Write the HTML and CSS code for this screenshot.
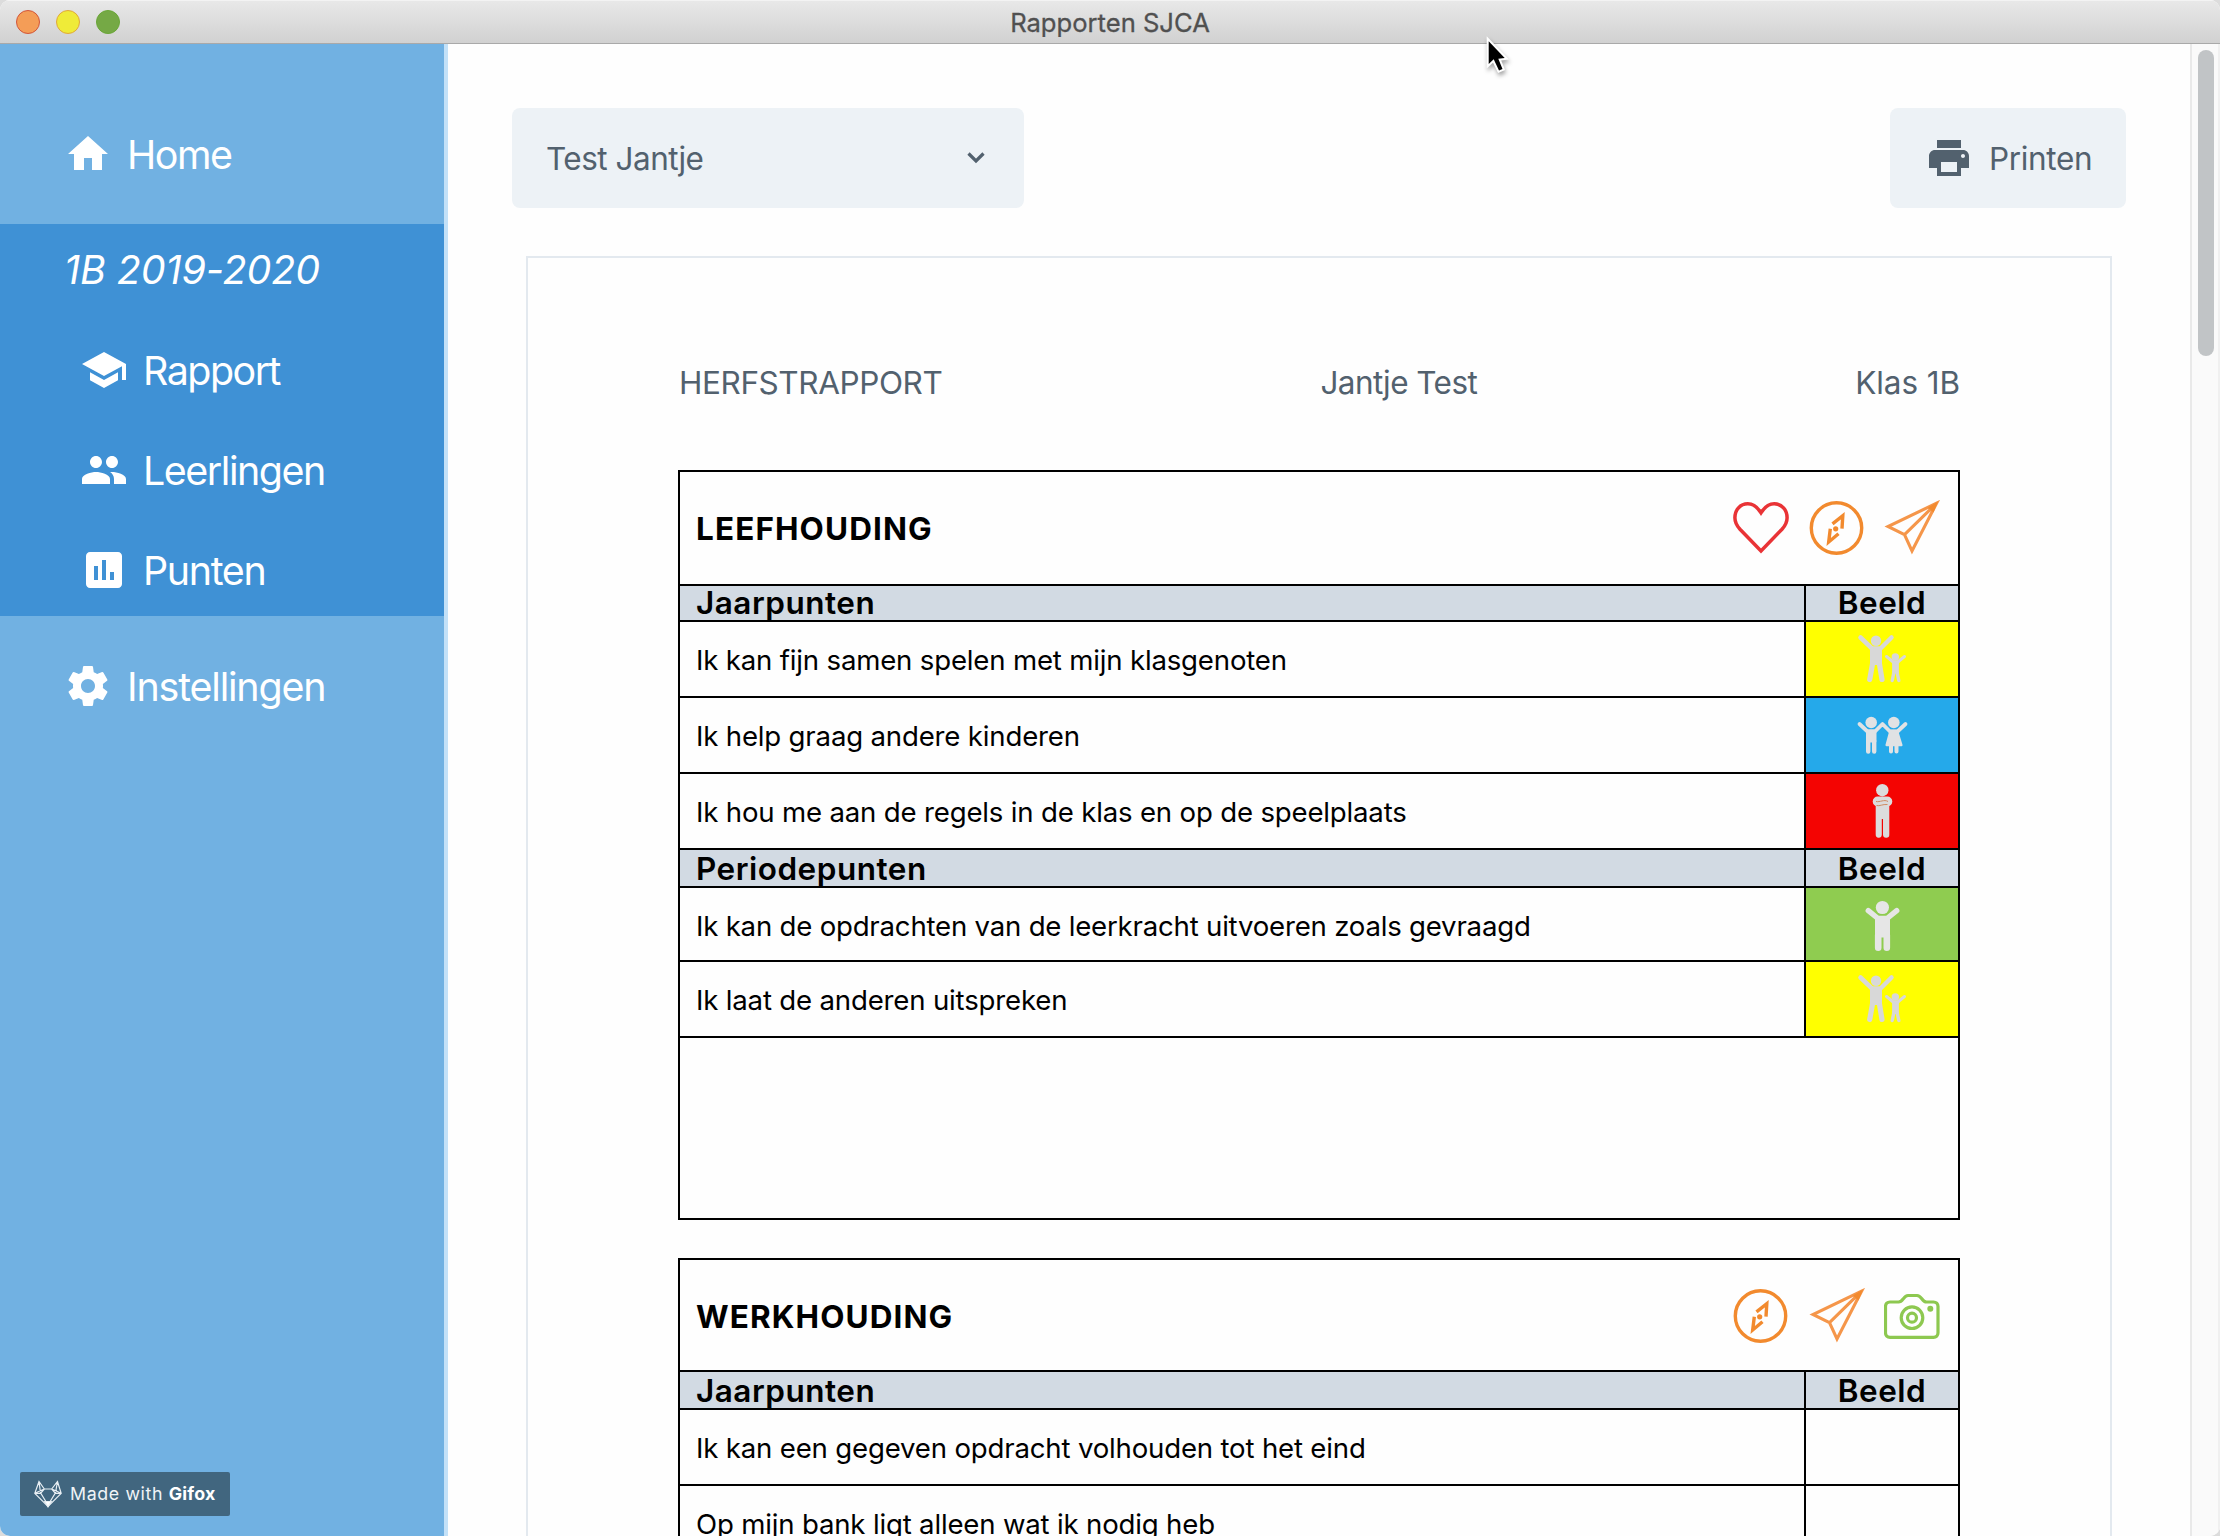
FILE: index.html
```
<!DOCTYPE html>
<html lang="nl">
<head>
<meta charset="utf-8">
<title>Rapporten SJCA</title>
<link rel="stylesheet" href="styles.css">
</head>
<body>
<svg class="sprite" aria-hidden="true">
  <symbol id="heart" viewBox="0 0 56 56"><path d="M28 12.7C24.3 7 19.7 3.8 14.8 3.8 7.2 3.8 1.9 10 1.9 17.7c0 4.300 1.700 7.800 5.100 11.500L28 51l21-21.800c3.400-3.700 5.100-7.200 5.100-11.500C54.100 10 48.800 3.800 41.200 3.800 36.300 3.800 31.700 7 28 12.700z" fill="none" stroke="#e93336" stroke-width="3.500"/></symbol>
  <symbol id="compass" viewBox="0 0 56 56"><g fill="none" stroke="#f28a2e" stroke-width="3.400"><circle cx="27.500" cy="28" r="25.200"/><path d="M23.500 23.800L33.800 15.600L33 28.700M21.300 28.800L19.700 42L29.500 33.800"/></g><circle cx="26.700" cy="28.800" r="2.600" fill="#f28a2e"/></symbol>
  <symbol id="plane" viewBox="0 0 56 56"><path d="M52.600 3.200L4 26.500l16.500 8.200L28 51zM20.500 34.700L52.600 3.200" fill="none" stroke="#f5964a" stroke-width="3.100"/><path d="M54 1.500L44 7.500l5.500 5z" fill="#f28a2e"/></symbol>
  <symbol id="camera" viewBox="0 0 56 56"><g fill="none" stroke="#8dc850" stroke-width="3.200"><path d="M6 14h8.500c2.200 0 3.600-1.600 4.800-3.200C21 8.400 22 7.500 24 7.500h9c2 0 3.200 1 4.800 3.200C39.200 12.600 40.300 14 42.500 14H49.500c2.700 0 4.500 1.800 4.500 4.500v26.300c0 2.700-1.800 4.500-4.500 4.500H6c-2.700 0-4.500-1.800-4.500-4.500V18.500C1.500 15.800 3.300 14 6 14z"/><circle cx="28" cy="29.700" r="10.800"/><circle cx="28" cy="29.700" r="4.500"/></g><circle cx="46.300" cy="20.700" r="3" fill="#8dc850"/></symbol>
  <symbol id="parent-child" viewBox="0 0 56 56"><g fill="#d8d8d8" stroke="#d8d8d8" stroke-linecap="round" stroke-linejoin="round"><circle cx="22" cy="9.700" r="5.200" stroke="none"/><path d="M6.500 6.500L18 17.500h8.500L37.500 6.500" fill="none" stroke-width="4.500"/><path d="M17.500 17.500h9v15h-9z" stroke-width="3"/><path d="M18.700 32L15.700 48.500M25.300 32L28 48.500" stroke-width="5.200"/><circle cx="41.300" cy="26" r="3.700" stroke="none"/><path d="M32.500 25.500l6.700 5.500h4.600L50.500 25.500" fill="none" stroke-width="3"/><path d="M39.300 31h4.400v10h-4.400z" stroke-width="2.400"/><path d="M40 41l-1.800 8.500M43 41l1.800 8.500" stroke-width="3.400"/></g></symbol>
  <symbol id="friends" viewBox="0 0 56 56"><g fill="#e0e2e4" stroke="#e0e2e4" stroke-linecap="round" stroke-linejoin="round"><circle cx="17.200" cy="15.500" r="5.800" stroke="none"/><circle cx="39.800" cy="15.500" r="5.800" stroke="none"/><path d="M5.500 17L13.500 24.500h7.500L28.500 17L36 24.500h7.500L51.500 17" fill="none" stroke-width="3.800"/><path d="M13.500 24h7.500v10h-7.500z" stroke-width="3"/><path d="M14.200 34v10.500M20.200 34v10.500" stroke-width="4.400"/><path d="M36.500 24h6.500l4.300 14h-14.600z" stroke-width="2.500"/><path d="M37 39v5.500M42.500 39v5.500" stroke-width="4"/></g></symbol>
  <symbol id="crossed-arms" viewBox="0 0 56 56"><circle cx="28.300" cy="7.200" r="6.200" fill="#dcdcdc"/><g fill="#dcdcdc"><rect x="18.700" y="13.500" width="19.600" height="10" rx="5"/><path d="M21.700 20h13.600v31.500a2.500 2.500 0 0 1-6.300.3V36h-1.200v15.800a2.500 2.500 0 0 1-6.100-.3z"/></g><path d="M22 18.500c4 1 8-2.500 12 0M22.500 22.500c3 1 6-1.500 11-1" fill="none" stroke="#cf8c63" stroke-width="1"/></symbol>
  <symbol id="cheering" viewBox="0 0 56 56"><g fill="#e6e6e6" stroke="#e6e6e6" stroke-linecap="round" stroke-linejoin="round"><circle cx="28.400" cy="11.500" r="6.600" stroke="none"/><path d="M14.300 14.700L24 22.500h9L42.700 14.700" fill="none" stroke-width="5.400"/><path d="M23 22.500h11v17h-11z" stroke-width="4"/><path d="M24.200 39v12.700M32.800 39v12.700" stroke-width="6.600"/></g></symbol>
</svg>

<div class="window">
  <header class="titlebar">
    <div class="lights"><span class="light close"></span><span class="light minimize"></span><span class="light zoom"></span></div>
    <span class="window-title">Rapporten SJCA</span>
  </header>
  <div class="body">
    <nav class="sidebar">
      <a class="nav-item"><svg class="nav-icon" viewBox="0 0 24 24"><path d="M10 20v-6h4v6h5v-8h3L12 3 2 12h3v8z"/></svg><span class="t-home">Home</span></a>
      <section class="nav-group">
        <h2 class="group-title">1B 2019-2020</h2>
        <a class="nav-item sub"><svg class="nav-icon" viewBox="0 0 24 24"><path d="M5 13.180v4L12 21l7-3.820v-4L12 17l-7-3.820zM12 3L1 9l11 6 9-4.910V17h2V9L12 3z"/></svg><span class="t-rapport">Rapport</span></a>
        <a class="nav-item sub"><svg class="nav-icon" viewBox="0 0 24 24"><path d="M16 11c1.660 0 2.990-1.340 2.990-3S17.660 5 16 5s-3 1.340-3 3 1.340 3 3 3zm-8 0c1.660 0 2.990-1.340 2.990-3S9.660 5 8 5 5 6.340 5 8s1.340 3 3 3zm0 2c-2.330 0-7 1.170-7 3.500V19h14v-2.500c0-2.330-4.670-3.500-7-3.500zm8 0c-.29 0-.62.02-.97.050 1.160.84 1.970 1.970 1.970 3.450V19h6v-2.500c0-2.330-4.670-3.500-7-3.500z"/></svg><span class="t-leerlingen">Leerlingen</span></a>
        <a class="nav-item sub"><svg class="nav-icon" viewBox="0 0 24 24"><path d="M19 3H5c-1.100 0-2 .9-2 2v14c0 1.100.9 2 2 2h14c1.100 0 2-.9 2-2V5c0-1.100-.9-2-2-2zM9 17H7v-7h2v7zm4 0h-2V7h2v10zm4 0h-2v-4h2v4z"/></svg><span class="t-punten">Punten</span></a>
      </section>
      <a class="nav-item"><svg class="nav-icon" viewBox="0 0 24 24"><path d="M19.430 12.980c.04-.32.07-.64.07-.98s-.03-.66-.07-.98l2.110-1.650c.19-.15.24-.42.12-.64l-2-3.460c-.12-.22-.39-.3-.61-.22l-2.490 1c-.52-.4-1.080-.73-1.690-.98l-.38-2.650C14.460 2.180 14.250 2 14 2h-4c-.25 0-.46.18-.49.42l-.38 2.650c-.61.25-1.170.59-1.690.98l-2.490-1c-.23-.09-.49 0-.61.22l-2 3.460c-.13.22-.07.49.12.64l2.110 1.650c-.04.32-.07.65-.07.98s.03.66.07.98l-2.110 1.650c-.19.15-.24.42-.12.64l2 3.460c.12.22.39.3.61.22l2.490-1c.52.4 1.080.73 1.690.98l.38 2.650c.03.24.24.42.49.42h4c.25 0 .46-.18.49-.42l.38-2.650c.61-.25 1.170-.59 1.690-.98l2.490 1c.23.09.49 0 .61-.22l2-3.460c.12-.22.07-.49-.12-.64l-2.110-1.650zM12 15.500c-1.930 0-3.500-1.570-3.500-3.500s1.570-3.500 3.500-3.500 3.500 1.570 3.500 3.500-1.570 3.500-3.500 3.500z"/></svg><span class="t-instellingen">Instellingen</span></a>
    </nav>

    <main class="content">
      <div class="toolbar">
        <div class="select"><span>Test Jantje</span><svg class="chevron" viewBox="0 0 20 14"><path d="M2.500 2.500L10 10l7.500-7.500"/></svg></div>
        <button class="print"><svg class="nav-icon" viewBox="0 0 24 24"><path d="M19 8H5c-1.660 0-3 1.340-3 3v6h4v4h12v-4h4v-6c0-1.660-1.340-3-3-3zm-3 11H8v-5h8v5zm3-7c-.55 0-1-.45-1-1s.45-1 1-1 1 .45 1 1-.45 1-1 1zm-1-9H6v4h12V3z"/></svg><span>Printen</span></button>
      </div>
      <article class="paper">
        <div class="report-head"><span class="t-report">HERFSTRAPPORT</span><span class="t-name">Jantje Test</span><span class="t-class">Klas 1B</span></div>

        <section class="subject">
          <div class="subject-head"><h3 class="subject-title">LEEFHOUDING</h3><div class="badges"><svg><use href="#heart"/></svg><svg><use href="#compass"/></svg><svg><use href="#plane"/></svg></div></div>
          <div class="row label slim"><div class="cell">Jaarpunten</div><div class="mark">Beeld</div></div>
          <div class="row"><div class="cell">Ik kan fijn samen spelen met mijn klasgenoten</div><div class="mark yellow"><svg><use href="#parent-child"/></svg></div></div>
          <div class="row"><div class="cell">Ik help graag andere kinderen</div><div class="mark blue"><svg><use href="#friends"/></svg></div></div>
          <div class="row"><div class="cell">Ik hou me aan de regels in de klas en op de speelplaats</div><div class="mark red"><svg><use href="#crossed-arms"/></svg></div></div>
          <div class="row label"><div class="cell">Periodepunten</div><div class="mark">Beeld</div></div>
          <div class="row short"><div class="cell">Ik kan de opdrachten van de leerkracht uitvoeren zoals gevraagd</div><div class="mark green"><svg><use href="#cheering"/></svg></div></div>
          <div class="row"><div class="cell">Ik laat de anderen uitspreken</div><div class="mark yellow"><svg><use href="#parent-child"/></svg></div></div>
          <div class="remarks"></div>
        </section>

        <section class="subject">
          <div class="subject-head low"><h3 class="subject-title">WERKHOUDING</h3><div class="badges"><svg><use href="#compass"/></svg><svg><use href="#plane"/></svg><svg><use href="#camera"/></svg></div></div>
          <div class="row label"><div class="cell">Jaarpunten</div><div class="mark">Beeld</div></div>
          <div class="row"><div class="cell">Ik kan een gegeven opdracht volhouden tot het eind</div><div class="mark"></div></div>
          <div class="row"><div class="cell">Op mijn bank ligt alleen wat ik nodig heb</div><div class="mark"></div></div>
        </section>
      </article>
    </main>
    <div class="scrollbar"><div class="thumb"></div></div>
  </div>

  <div class="watermark">
    <svg class="fox" viewBox="0 0 28 28"><path d="M5 1.500L.8 13.300 14 26.500 27.200 13.300 23.500 1.500 17.700 9h-7.400zM5 1.500l1.500 11.300L14 25M23.500 1.500L21.500 12.800 14 25M.8 13.300L10.300 9M27.200 13.300L17.700 9M.8 13.300h5.700L10.300 9M27.200 13.300h-5.700L17.700 9"/><path class="nose" d="M10.800 21.500h6.400L14 26.800z"/></svg>
    <span class="made">Made with <b>Gifox</b></span>
  </div>
  <svg class="cursor" viewBox="0 0 28 42"><path d="M3.700 7.300V30l5-4.700L14 36.500l3.500-1.500-4.200-10.300 6.400-.7z"/></svg>
</div>
</body>
</html>
```
FILE: styles.css
```
* { box-sizing: border-box; }

body {
  margin: 0;
  height: 1536px;
  overflow: hidden;
  background: #dcdcdc;
  font-family: Inter, "Liberation Sans", sans-serif;
  color: #000;
}

h2, h3 { margin: 0; font-weight: inherit; }

.sprite { position: absolute; width: 0; height: 0; }

.window {
  position: relative;
  display: flex;
  flex-direction: column;
  width: 2220px;
  height: 1536px;
  overflow: hidden;
  border-radius: 10px;
  background: #fefefe;
}

/* Title bar */
.titlebar {
  display: grid;
  grid-template-columns: 1fr auto 1fr;
  align-items: center;
  flex: none;
  height: 44px;
  padding: 0 16px;
  border-top: 1px solid #f3f3f3;
  border-bottom: 1px solid #a9a9a9;
  background: linear-gradient(#e8e8e8, #d1d1d1);
}
.lights { display: flex; gap: 16px; }
.light { width: 24px; height: 24px; border-radius: 50%; border: 1px solid; }
.close { background: #f49d57; border-color: #d2553a; }
.minimize { background: #efeb38; border-color: #e0a83a; }
.zoom { background: #75a945; border-color: #6aa638; }
.window-title { font-size: 25.6px; letter-spacing: 0; color: #505050; -webkit-text-stroke: 0.3px #505050; }

.body { display: flex; flex: 1; min-height: 0; }

/* Sidebar */
.sidebar {
  flex: none;
  width: 448px;
  padding-top: 64px;
  border-right: 4px solid #c3e1f8;
  background: #71b1e2;
  color: #fff;
  font-size: 39.4px;
  white-space: nowrap;
}
.nav-item { display: flex; align-items: center; gap: 15px; height: 92px; padding-left: 64px; }
.nav-item.sub { padding-left: 80px; }
.nav-item span { padding-top: 2px; }
.nav-icon { width: 48px; height: 48px; fill: currentColor; flex: none; }
.nav-group { display: flex; flex-direction: column; gap: 8px; margin: 24px 0; background: #3f91d5; }
.group-title { height: 92px; padding-left: 64px; font-size: 39.4px; font-style: italic; line-height: 93px; letter-spacing: -0.05px; }
.t-home, .t-rapport { letter-spacing: -1.5px; }
.t-leerlingen { letter-spacing: -1.45px; }
.t-punten { letter-spacing: -1.34px; }
.t-instellingen { letter-spacing: -1.17px; }

/* Content */
.content { flex: 1; min-width: 0; padding: 64px 64px 0; overflow: hidden; font-size: 31.5px; }
.toolbar { display: flex; justify-content: space-between; height: 100px; color: #52616e; }
.select, .print { display: flex; align-items: center; border: 0; border-radius: 8px; background: #edf2f6; color: inherit; }
.select { justify-content: space-between; width: 512px; padding: 0 38px 0 34px; letter-spacing: -0.5px; }
.chevron { width: 20px; height: 14px; fill: none; stroke: currentColor; stroke-width: 3.2; }
.print { gap: 16px; width: 236px; padding: 0 0 0 35px; font: inherit; letter-spacing: -0.35px; }

.paper { margin: 48px 14px 0; padding: 100px 150px 0; border: 2px solid #e3e9ef; }
.report-head { display: flex; justify-content: space-between; align-items: center; height: 48px; margin-bottom: 64px; padding-left: 1px; color: #52616e; }
.t-report { letter-spacing: -0.41px; }
.t-name { letter-spacing: -0.56px; }
.t-class { letter-spacing: -0.1px; }

/* Subject tables */
.subject { margin-bottom: 38px; border: 2px solid #000; }
.subject-head { display: flex; align-items: center; justify-content: space-between; height: 112px; padding: 0 18px 0 16px; }
.subject-head.low { height: 110px; padding-top: 2px; }
.subject-title { font-weight: 700; font-size: 31.5px; letter-spacing: 1.1px; }
.badges { display: flex; gap: 19.5px; }
.badges svg, .mark svg { display: block; width: 56px; height: 56px; }

.row { display: grid; grid-template-columns: 1fr 154px; height: 76px; border-top: 2px solid #000; font-size: 27.6px; letter-spacing: -0.18px; }
.row.short { height: 74px; }
.row.short .cell { padding-top: 4px; letter-spacing: -0.21px; }
.cell { display: flex; align-items: center; padding: 2px 0 0 16px; white-space: nowrap; }
.mark { display: flex; align-items: center; justify-content: center; border-left: 2px solid #000; }
.row.label { height: 38px; background: #d2dae3; font-size: 31.5px; font-weight: 600; letter-spacing: 0.5px; line-height: 36px; }
.row.label.slim { height: 36px; line-height: 34px; }
.row.label .cell { padding-top: 0; }
.row.label:not(.slim) .cell, .row.label:not(.slim) .mark { padding-top: 1px; }
.yellow { background: #ff0; }
.blue { background: #25a9ea; }
.red { background: #f40402; }
.green { background: #8fcc50; }
.remarks { height: 182px; border-top: 2px solid #000; }

/* Scrollbar */
.scrollbar { flex: none; width: 30px; padding: 6px 4px 0 6px; border-left: 2px solid #e9e9e9; border-right: 2px solid #f0f0f0; background: #fafafa; }
.thumb { width: 16px; height: 306px; border-radius: 8px; background: #c1c4c6; }

/* Overlays */
.watermark {
  position: absolute;
  left: 20px;
  top: 1472px;
  display: flex;
  align-items: center;
  gap: 8px;
  width: 210px;
  height: 44px;
  padding-left: 14px;
  border-radius: 2px;
  background: #41667f;
  color: #f0f4f7;
  font-size: 17.8px;
  letter-spacing: 0.62px;
  white-space: nowrap;
}
.watermark b { letter-spacing: 0.2px; color: #fff; }
.fox { width: 28px; height: 28px; fill: none; stroke: #e8eff4; stroke-width: 1.2; }
.fox .nose { fill: #fff; }
.made { position: relative; top: -1px; }
.cursor {
  position: absolute;
  left: 1485px;
  top: 34px;
  width: 28px;
  height: 42px;
  overflow: visible;
  fill: #000;
  stroke: #fff;
  stroke-width: 4;
  paint-order: stroke;
  filter: drop-shadow(1px 3px 2px rgba(0, 0, 0, 0.35));
}
```
